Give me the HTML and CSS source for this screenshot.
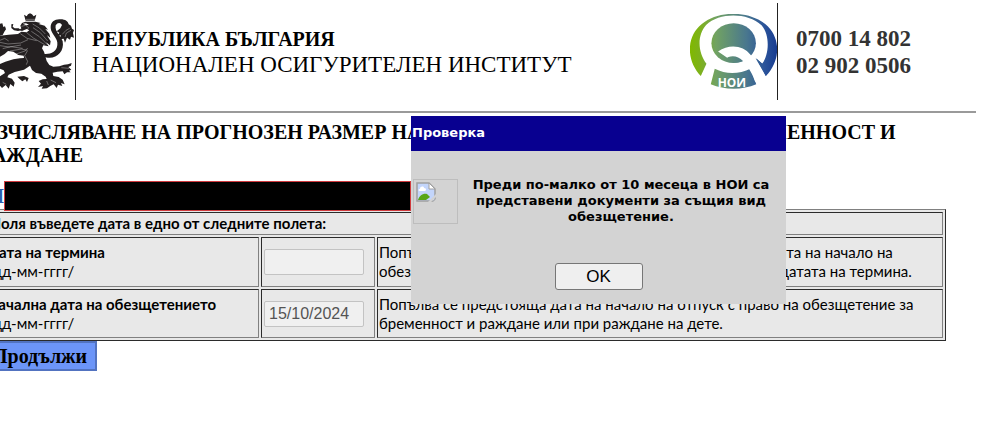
FILE: index.html
```html
<!DOCTYPE html>
<html lang="bg">
<head>
  <meta charset="UTF-8">
  <meta name="viewport" content="width=device-width, initial-scale=1.0">
  <title>Национален осигурителен институт</title>
  <link rel="stylesheet" href="styles.css">
</head>
<body>

  <div class="page">
    <header class="header">
      <div class="emblem">
        <svg class="lion" viewBox="0 10 225 231" role="img" aria-label="Герб">
          <g fill="#231f20">
            <path d="M72 15l8 5 4-6 6-3 6 3 5 6 8-5-5 18H77z"/>
            <path d="M76 36L106 36L122 40L116 43L134 48L144 60L136 58L148 72L151 84L141 77L152 95L150 107L138 98L146 110L130 107L126 116L132 126L136 140L140 154L148 166L160 171L178 170L192 165L204 164L215 160L213 168L205 172L214 180L207 183L212 188L201 188L193 194L188 185L172 186L158 189L160 199L176 202L188 210L194 224L183 220L187 229L174 225L170 235L161 224L152 228L141 236L125 237L129 229L114 232L123 222L116 214L128 209L140 208L137 201L124 192L108 190L96 181L90 168L72 180L44 187L26 195L22 203L36 207L44 219L41 231L31 223L26 237L17 226L6 235L0 228V163L16 156L40 149L60 146L72 145L71 138L55 136L40 126L24 124L14 133L0 141V78L26 75L54 73L64 66L80 68L88 62L80 58L66 64L58 61L64 56L61 48L66 40z"/>
            <path d="M0 42L7 41L10 52L15 50L18 59L13 66L8 76L0 78z"/>
            <path d="M34 44L40 43L38 51L44 56L56 56L64 62L54 64L42 62L34 55z"/>
            <path d="M52 201L72 199L86 205L81 217L76 209L67 215L58 207z"/>
            <path d="M126 132C149 136 170 128 172 106C175 86 153 73 152 55C151 36 164 30 178 29C196 28 204 35 206 44L213 48L216 57L222 61L219 70L222 84L213 81L210 90L201 84L195 99L191 87L178 89L183 77L172 78L178 69L170 65L181 56L186 46C182 37 172 38 167 47C163 66 184 81 188 95C194 126 169 148 143 144L128 141z"/>
          </g>
          <path fill="#fff" d="M0 200L15 190L11 182L0 177zM68 42l10-1 9 4-8 2z"/>
          <g class="lion-lines">
            <path d="M78 29h28M64 50l13-3 9 7-6 9M98 43l20 12 18 18M99 54l22 15 22 25M94 65l24 16 24 24M80 69l20 16 34 20M61 72l20 14 29 7"/>
            <path d="M0 98l24 5 38-3 22-10M0 108l28 4 35-6M8 117l24-6 36 5M30 124l34-6 19 4M48 133l27-9 8-9M82 124l-8 14 9 17-4 10"/>
            <path d="M187 74l11-12 11-6M195 82l4-12 14-8M0 92l14-6 12 8M184 174l23 2M152 211l16 8M140 214l5 12M8 218l11 6"/>
          </g>
        </svg>
      </div>
      <div class="names">
        <div class="state">РЕПУБЛИКА БЪЛГАРИЯ</div>
        <div class="institute">НАЦИОНАЛЕН ОСИГУРИТЕЛЕН ИНСТИТУТ</div>
      </div>
      <svg class="noi" viewBox="30 27 261 226" role="img" aria-label="НОИ">
        <defs>
          <linearGradient id="noiFill" gradientUnits="userSpaceOnUse" x1="30" y1="0" x2="291" y2="0">
            <stop offset="0" stop-color="#80b800"/>
            <stop offset="0.12" stop-color="#7db11d"/>
            <stop offset="0.3" stop-color="#71a263"/>
            <stop offset="0.65" stop-color="#49778e"/>
            <stop offset="0.85" stop-color="#2c559a"/>
            <stop offset="1" stop-color="#183c91"/>
          </linearGradient>
        </defs>
        <path fill="url(#noiFill)" d="M62 214C18 168 17 95 65 57C117 15 207 17 257 58C304 98 303 167 258 214L229 160L247 177C268 148 271 91 245 61C203 22 118 22 78 60C50 92 53 142 79 177Z"/>
        <ellipse cx="161" cy="115" rx="67" ry="60" fill="url(#noiFill)"/>
        <path fill="url(#noiFill)" d="M104 192C138 209 176 209 213 191L229 239C188 257 134 257 92 239Z"/>
        <path fill="#fff" d="M114 140C148 116 190 122 211 149C224 164 240 187 256 216L226 232C218 208 208 192 195 177C182 159 162 152 148 163Z"/>
        <path fill="url(#noiFill)" d="M258 214L227 160L248 177L270 150L280 180Z"/>
        <path fill="url(#noiFill)" d="M134 164C148 150 173 150 189 169C170 176 149 174 134 164Z"/>
        <text x="113" y="247" class="noi-text">НОИ</text>
      </svg>
      <div class="phones">
        <div>0700 14 802</div>
        <div>02 902 0506</div>
      </div>
    </header>

    <main>
      <h1>ИЗЧИСЛЯВАНЕ НА ПРОГНОЗЕН РАЗМЕР НА ПАРИЧНО ОБЕЗЩЕТЕНИЕ ЗА БРЕМЕННОСТ И РАЖДАНЕ</h1>

      <div class="person">
        <span class="person-label">П</span>
        <div class="person-data"></div>
      </div>

      <form>
        <table class="dates">
          <colgroup>
            <col class="col-label">
            <col class="col-date">
            <col>
          </colgroup>
          <tr>
            <th colspan="3">Моля въведете дата в едно от следните полета:</th>
          </tr>
          <tr class="date-row">
            <td><label for="termDate"><b>Дата на термина</b><br>/дд-мм-гггг/</label></td>
            <td><input type="text" id="termDate" disabled></td>
            <td>Попълва се когато е известна дата на термина и липсва дата на начало на<br>обезщетението. Обезщетението се изчислява съобразно датата на термина.</td>
          </tr>
          <tr class="date-row">
            <td><label for="startDate"><b>Начална дата на обезщетението</b><br>/дд-мм-гггг/</label></td>
            <td><input type="text" id="startDate" value="15/10/2024" disabled></td>
            <td>Попълва се предстояща дата на начало на отпуск с право на обезщетение за бременност и раждане или при раждане на дете.</td>
          </tr>
        </table>
        <button type="button" class="continue">Продължи</button>
      </form>
    </main>
  </div>

  <div class="dialog" role="alertdialog" aria-labelledby="dialogTitle">
    <div class="dialog-title" id="dialogTitle">Проверка</div>
    <div class="dialog-body">
      <div class="dialog-image">
        <svg viewBox="0 0 20 20" width="20" height="20">
          <path fill="#c3d5fb" stroke="#a0a0a0" stroke-width="1.5" d="M1 1h12l6 6v12H1z"/>
          <path fill="#fff" d="M4 7c0-3 4-3 4-1 3 0 2 3 1 3H4c-2 0-2-2 0-2z"/>
          <path fill="#58a618" d="M2 18c1-4 5-7 9-6l3 3-4 3z"/>
          <path fill="#fff" stroke="#a0a0a0" d="M13 1v6h6z"/>
          <path fill="#d3d3d3" d="M12 20l8-8v3l-5 5zM17 20l3-3v3z"/>
        </svg>
      </div>
      <p>Преди по-малко от 10 месеца в НОИ са представени документи за същия вид обезщетение.</p>
    </div>
    <div class="dialog-buttons">
      <button type="button" class="ok">OK</button>
    </div>
  </div>

</body>
</html>
```

FILE: styles.css
```css
body {
  margin: 0;
  background-color: #fff;
  color: #000;
  font-family: "Liberation Serif", serif;
  overflow-x: hidden;
}

.page {
  margin-left: -18px;
  margin-right: 9px;
}

.header {
  display: flex;
  align-items: center;
  height: 97px;
  padding-top: 3px;
  padding-bottom: 11px;
  border-bottom: 2px solid #9a9a9a;
}

.emblem {
  align-self: stretch;
  display: flex;
  align-items: center;
  padding-left: 18px;
  border-right: 1px solid #222;
}

.lion {
  width: 75px;
  height: 77px;
}

.names {
  flex: 1;
  padding-left: 16px;
  line-height: 25px;
}

.state {
  font-size: 20px;
  font-weight: bold;
}

.institute {
  font-size: 23px;
}

.noi {
  width: 87px;
  height: 75px;
}

.noi-text {
  font-family: "Open Sans", sans-serif;
  font-size: 36px;
  font-weight: bold;
  fill: #fff;
}

.lion-lines {
  fill: none;
  stroke: #fff;
  stroke-width: 1;
}

.phones {
  align-self: stretch;
  box-sizing: border-box;
  width: 199px;
  padding: 22px 0 0 18px;
  border-left: 1px solid #222;
  font-size: 23px;
  font-weight: bold;
  line-height: 27px;
  color: #333;
}

h1 {
  margin: 8px 40px 14px 0;
  font-size: 20px;
  line-height: 23px;
}

.person {
  display: flex;
  align-items: center;
  height: 30px;
}

.person-label {
  width: 22px;
  font-size: 20px;
  font-weight: bold;
  text-align: right;
  color: #2b5fae;
}

.person-data {
  box-sizing: border-box;
  width: 407px;
  height: 30px;
  background-color: #000;
  border: 1px solid #d03a3e;
}

.dates {
  width: calc(100% - 30px);
  margin-top: -2px;
  table-layout: fixed;
  border: 1px solid;
  border-color: #808080 #2b2b2b #2b2b2b #808080;
  border-spacing: 2px;
  background-color: #e8e8e8;
  font-family: Lato, sans-serif;
  font-size: 15px;
  line-height: 19px;
}

.dates th,
.dates td {
  padding: 1px;
  border: 1px solid;
  border-color: #2b2b2b #808080 #808080 #2b2b2b;
  text-align: left;
}

.dates th {
  height: 19px;
}

.date-row {
  height: 50px;
}

.date-row:last-child {
  height: 49px;
}

.col-label {
  width: 274px;
}

.col-date {
  width: 114px;
}

.dates input {
  box-sizing: border-box;
  width: 100px;
  height: 26px;
  margin: 0 1px;
  padding: 1px 4px;
  border: 1px solid #c3c3c3;
  border-radius: 2px;
  background-color: #f0f0f0;
  color: #545454;
  font-family: "Liberation Sans", sans-serif;
  font-size: 16px;
}

.continue {
  display: block;
  height: 30px;
  padding: 0 8px;
  border: 2px solid #5273c0;
  background-color: #6c95f8;
  color: #000;
  font-family: "Liberation Serif", serif;
  font-size: 20px;
  font-weight: bold;
  line-height: 26px;
}

.dialog {
  position: absolute;
  top: 116px;
  left: 411px;
  width: 375px;
  background-color: #d3d3d3;
  font-family: Verdana, "DejaVu Sans", sans-serif;
  font-size: 13px;
  font-weight: bold;
  line-height: 16px;
}

.dialog-title {
  padding: 9px 1px 10px;
  background-color: #080090;
  color: #fff;
}

.dialog-body {
  display: flex;
  align-items: center;
  padding: 26px 2px;
}

.dialog-image {
  box-sizing: border-box;
  width: 45px;
  height: 45px;
  padding: 2px;
  border: 1px solid #bdbdbd;
}

.dialog-body p {
  flex: 1;
  margin: 0;
  padding: 0 8px;
  text-align: center;
}

.dialog-buttons {
  padding: 12px 0 14px;
  text-align: center;
}

.ok {
  width: 88px;
  height: 27px;
  padding: 0;
  border: 1px solid #767676;
  border-radius: 3px;
  background-color: #efefef;
  color: #000;
  font-family: "Liberation Sans", sans-serif;
  font-size: 17px;
}
```
